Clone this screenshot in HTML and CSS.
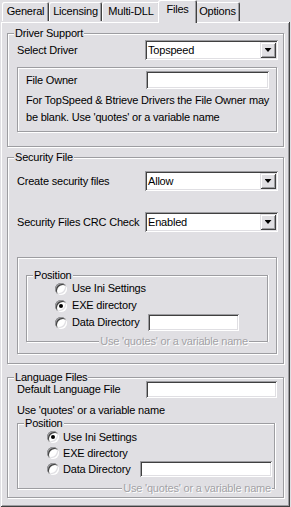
FILE: index.html
```html
<!DOCTYPE html>
<html lang="en">
<head>
  <meta charset="UTF-8">
  <meta name="viewport" content="width=device-width, initial-scale=1.0">
  <title>Files</title>
  <link rel="stylesheet" href="styles.css">
</head>
<body>
  <div class="window">
    <div class="tabs">
      <div class="tab tab-general">General</div>
      <div class="tab tab-licensing">Licensing</div>
      <div class="tab tab-multi">Multi-DLL</div>
      <div class="tab tab-files active">Files</div>
      <div class="tab tab-options">Options</div>
    </div>

    <div class="panel">
      <!-- Driver support -->
      <fieldset class="group group-driver">
        <legend>Driver Support</legend>
        <div class="row row-driver">
          <span class="label">Select Driver</span>
          <div class="combo"><span class="combo-text">Topspeed</span><span class="drop"></span></div>
        </div>
        <div class="etched owner-box">
          <div class="row">
            <span class="label label-owner">File Owner</span>
            <div class="edit edit-owner"></div>
          </div>
          <p class="note">For TopSpeed &amp; Btrieve Drivers the File Owner may<br>be blank. Use 'quotes' or a variable name</p>
        </div>
      </fieldset>

      <!-- Security file -->
      <fieldset class="group group-security">
        <legend>Security File</legend>
        <div class="row row-create">
          <span class="label">Create security files</span>
          <div class="combo"><span class="combo-text">Allow</span><span class="drop"></span></div>
        </div>
        <div class="row row-crc">
          <span class="label">Security Files CRC Check</span>
          <div class="combo"><span class="combo-text">Enabled</span><span class="drop"></span></div>
        </div>
        <div class="etched pos-box">
          <fieldset class="position position-security">
            <legend>Position</legend>
            <div class="radio-row first">
              <span class="radio"></span><span class="radio-label">Use Ini Settings</span>
            </div>
            <div class="radio-row">
              <span class="radio checked"></span><span class="radio-label">EXE directory</span>
            </div>
            <div class="radio-row">
              <span class="radio"></span><span class="radio-label radio-label-data">Data Directory</span>
              <div class="edit edit-data"></div>
            </div>
            <div class="caption">
              <span class="rule"></span><span class="caption-text">Use 'quotes' or a variable name</span><span class="rule rule-end"></span>
            </div>
          </fieldset>
        </div>
      </fieldset>

      <!-- Language files -->
      <fieldset class="group group-language">
        <legend>Language Files</legend>
        <div class="row row-language">
          <span class="label label-language">Default Language File</span>
          <div class="edit edit-language"></div>
        </div>
        <p class="hint">Use 'quotes' or a variable name</p>
        <fieldset class="position position-language">
          <legend>Position</legend>
          <div class="radio-row">
            <span class="radio checked"></span><span class="radio-label">Use Ini Settings</span>
          </div>
          <div class="radio-row">
            <span class="radio"></span><span class="radio-label">EXE directory</span>
          </div>
          <div class="radio-row">
            <span class="radio"></span><span class="radio-label radio-label-data">Data Directory</span>
            <div class="edit edit-lang-data"></div>
          </div>
          <div class="caption">
            <span class="rule"></span><span class="caption-text">Use 'quotes' or a variable name</span><span class="rule rule-end"></span>
          </div>
        </fieldset>
      </fieldset>
    </div>
  </div>
</body>
</html>
```

FILE: styles.css
```css
body {
  margin: 0;
  background-color: #e0dfe3;
  font-family: "Liberation Sans", Arial, sans-serif;
  font-size: 11px;
  line-height: 13px;
  letter-spacing: -0.2px;
  color: #000;
}
.window {
  width: 290px;
  height: 507px;
  display: flex;
  flex-direction: column;
}

/* tab strip */
.tabs {
  display: flex;
  align-items: flex-end;
  height: 21px;
  padding-left: 2px;
  position: relative;
  z-index: 1;
}
.tab {
  height: 19px;
  line-height: 19px;
  text-align: center;
  background-color: #e0dfe3;
  border-radius: 2px 2px 0 0;
  box-shadow: inset 1px 1px #fff, inset -1px 0 #404040, inset -2px 0 #9d9da1;
}
.tab-general { width: 47px; }
.tab-licensing { width: 53px; }
.tab-multi { width: 58px; }
.tab-options { width: 45px; }
.tab.active {
  width: 39px;
  height: 23px;
  line-height: 19px;
  margin: 0 -2px -2px;
  position: relative;
  z-index: 2;
}

/* page body */
.panel {
  flex: 1;
  padding: 7px 6px 0 7px;
  box-shadow: inset 1px 1px #e0dfe3, inset -1px -1px #404040, inset 2px 2px #fff, inset -2px -2px #9d9da1;
}
fieldset {
  margin: 0;
  min-width: 0;
  border: 1px solid #9d9da1;
  box-shadow: inset 1px 1px #fff, 1px 1px #fff;
}
legend {
  padding: 0 1px;
  line-height: 11px;
  background-color: #e0dfe3;
}
.group {
  padding: 0 5px 0 9px;
}
.group legend {
  margin-left: -3px;
}
.group-driver { padding-bottom: 14px; }
.group-security { margin-top: 5px; padding-bottom: 9px; }
.group-language { margin-top: 8px; padding-bottom: 8px; }

.row {
  display: flex;
  align-items: center;
}
.label {
  flex: none;
  width: 128px;
}
.row-driver { margin-top: 1px; }
.row-create { margin-top: 8px; }
.row-crc { margin-top: 21px; }
.row-language { margin-top: -2px; }
.label-language { width: 129px; }

/* sunken controls */
.combo, .edit {
  box-sizing: border-box;
  background-color: #fff;
  box-shadow: inset 1px 1px #9d9da1, inset -1px -1px #fff, inset 2px 2px #404040, inset -2px -2px #e0dfe3;
}
.combo {
  display: flex;
  width: 133px;
  height: 20px;
  padding: 2px;
}
.combo-text {
  flex: 1;
  padding-left: 1px;
  line-height: 16px;
}
.drop {
  flex: none;
  width: 16px;
  display: flex;
  align-items: center;
  justify-content: center;
  background-color: #e0dfe3;
  box-shadow: inset 1px 1px #e0dfe3, inset -1px -1px #404040, inset 2px 2px #fff, inset -2px -2px #9d9da1;
}
.drop::after {
  content: "";
  width: 7px;
  height: 4px;
  background-color: #000;
  clip-path: polygon(0 0, 100% 0, 50% 100%);
}
.edit-owner { width: 123px; height: 18px; }
.edit-data { width: 91px; height: 17px; }
.edit-language { width: 131px; height: 17px; }
.edit-lang-data { width: 132px; height: 16px; }

/* etched frames */
.etched {
  border: 1px solid #9d9da1;
  box-shadow: inset 1px 1px #fff, 1px 1px #fff;
}
.owner-box {
  margin: 7px 1px 0 0;
  padding: 3px 0 5px 8px;
}
.label-owner { width: 120px; }
.note {
  margin: 3px 0 0;
  line-height: 17px;
  white-space: nowrap;
}
.hint {
  margin: 6px 0 0;
}
.pos-box {
  margin: 25px 1px 0 0;
  padding: 12px 8px 11px;
}

/* radio groups */
.position {
  padding: 0;
  border-bottom: none;
  box-shadow: inset 1px 1px #fff, 1px 0 #fff;
}
.position legend {
  margin-left: 6px;
}
.position-language {
  margin: 1px 3px 0 0;
}
.radio-row {
  display: flex;
  align-items: center;
  height: 17px;
  padding-left: 28px;
}
.position-security .radio-row.first { margin-top: -1px; }
.position-language .radio-row {
  height: 16px;
  padding-left: 29px;
}
.radio {
  flex: none;
  width: 12px;
  height: 12px;
  border-radius: 50%;
  background-color: #fff;
  display: flex;
  align-items: center;
  justify-content: center;
  box-shadow: inset 1px 1px #9d9da1, inset -1px -1px #fff, inset 2px 2px #404040, inset -2px -2px #e0dfe3;
}
.radio.checked::after {
  content: "";
  width: 4px;
  height: 4px;
  border-radius: 50%;
  background-color: #000;
}
.radio-label { margin-left: 5px; }
.position-language .radio-label { margin-left: 4px; }
.radio-label-data { width: 76px; }
.position-language .radio-label-data { width: 77px; }

/* bottom caption drawn into the frame line */
.caption {
  display: flex;
  align-items: center;
  height: 1px;
  margin-top: 10px;
}
.position-language .caption { margin-top: 11px; }
.rule {
  flex: 1;
  height: 1px;
  background-color: #9d9da1;
  box-shadow: 0 1px #fff;
}
.rule-end { flex: none; width: 18px; }
.position-language .rule-end { width: 2px; }
.caption-text {
  padding: 0 1px;
  color: #a3a2a6;
  text-shadow: 1px 1px #fff;
}
```
